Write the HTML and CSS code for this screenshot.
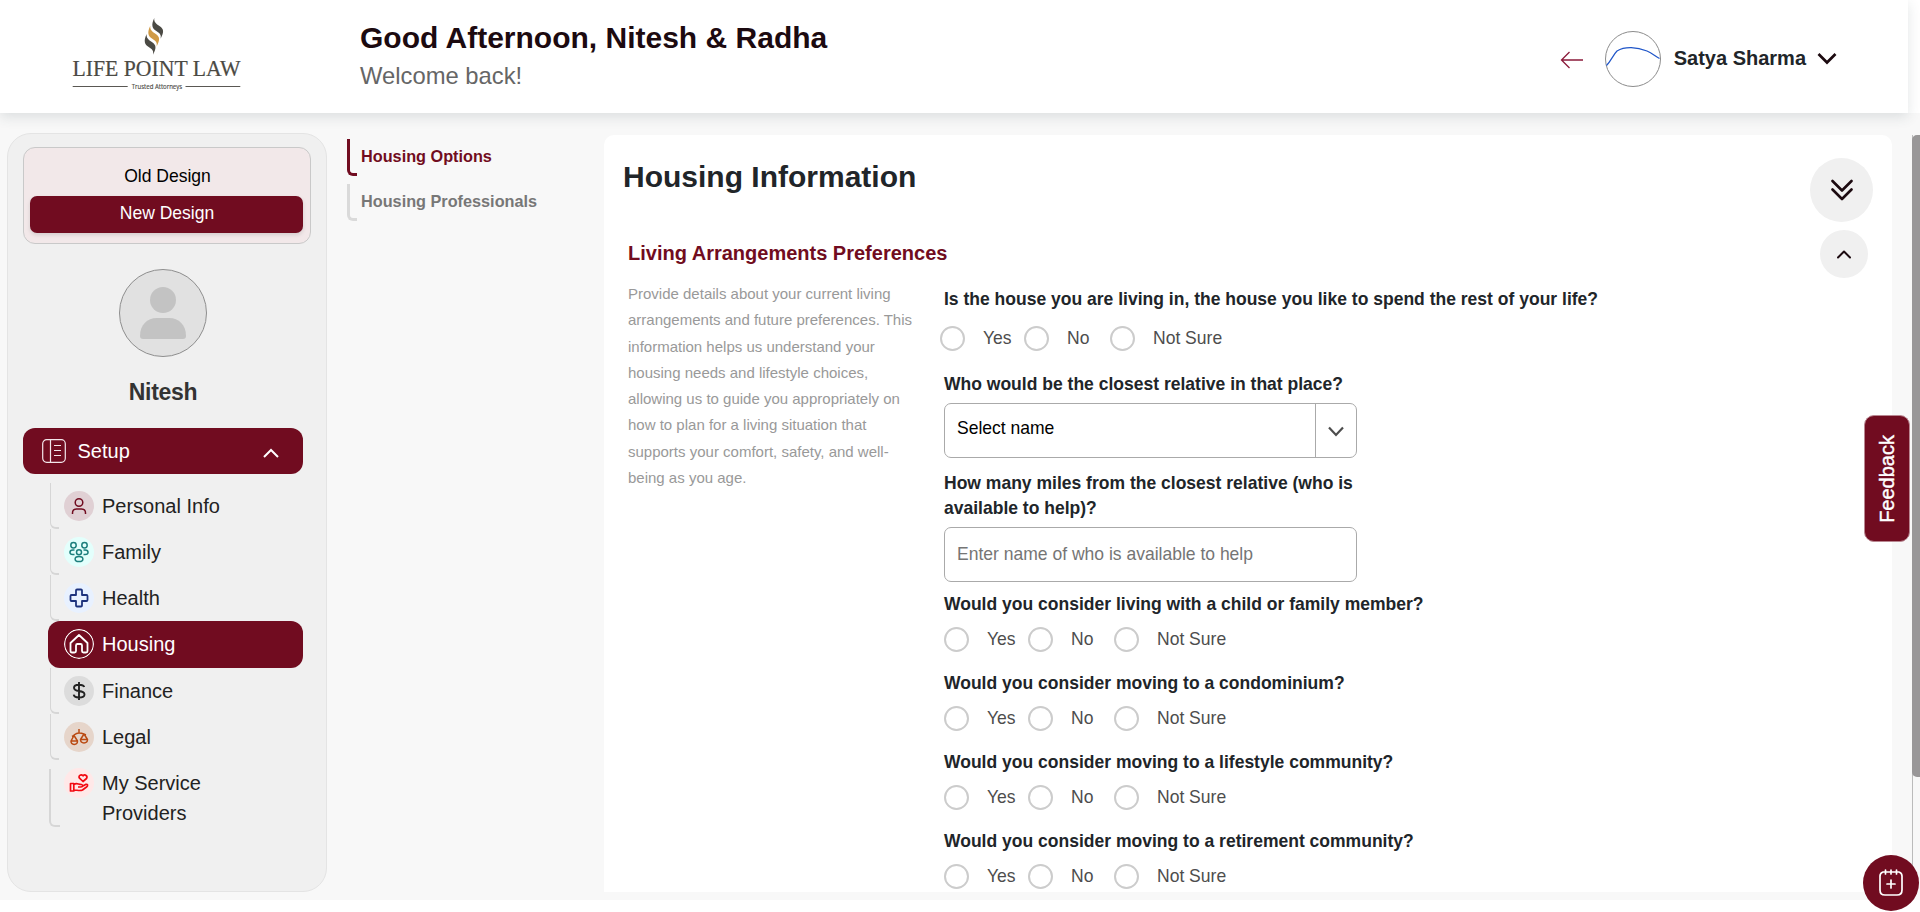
FILE: index.html
```html
<!DOCTYPE html>
<html lang="en">
<head>
<meta charset="utf-8">
<title>Housing Information</title>
<link rel="stylesheet" href="styles.css">
</head>
<body>
<header class="topbar">
  <svg class="logo" width="172" height="76" viewBox="0 0 172 76">
    <g fill="#4b4a44">
      <path transform="translate(81.300 0)" d="M2 0C-1.500 7 0 10.500 4 13C8 15.500 9 17 8.300 20.700C12 14 11.500 11 7.500 8.300C3.500 5.500 1.500 4 2 0Z"/>
      <path transform="translate(73.700 16)" d="M2 0C-1.500 7 0 10.500 4 13C8 15.500 9 17 8.300 20.700C12 14 11.500 11 7.500 8.300C3.500 5.500 1.500 4 2 0Z"/>
    </g>
    <path fill="#d09a45" transform="translate(77.300 7.700)" d="M2 0C-1.500 7 0 10.500 4 13C8 15.500 9 17 8.300 20.700C12 14 11.500 11 7.500 8.300C3.500 5.500 1.500 4 2 0Z"/>
    <text class="logo-name" x="1.500" y="57.700" textLength="168" lengthAdjust="spacingAndGlyphs">LIFE POINT LAW</text>
    <path d="M1.700 68.500H56.700M114.500 68.500H169.300" stroke="#5a5853" stroke-width="1"/>
    <text class="logo-tag" x="60.700" y="70.500" textLength="50.500" lengthAdjust="spacingAndGlyphs">Trusted Attorneys</text>
  </svg>
  <div class="greeting">
    <h1>Good Afternoon, Nitesh &amp; Radha</h1>
    <p>Welcome back!</p>
  </div>
  <div class="account">
    <svg class="back" width="24" height="18" viewBox="0 0 24 18" fill="none" stroke="#8a1a3a" stroke-width="1.300"><path d="M23 9H1.500M9.500 1L1.500 9L9.500 17"/></svg>
    <svg class="signature" width="56" height="56" viewBox="0 0 56 56" fill="none"><circle cx="28" cy="28" r="27.500" stroke="#8c8c8c"/><path d="M1.500 34.500C6 30 8 24 12 20C20 15 32 16 42 20C47 22 50 25 54.500 27.500" stroke="#1f55c8" stroke-width="1.200"/></svg>
    <span class="account-name">Satya Sharma</span>
    <svg class="caret" width="20" height="13" viewBox="0 0 20 13" fill="none" stroke="#1c0a10" stroke-width="2.700"><path d="M1.500 2L10 10.500L18.500 2"/></svg>
  </div>
</header>

<div class="workspace">
  <aside class="sidebar">
    <div class="design-toggle"><span class="toggle-option">Old Design</span><span class="toggle-option selected">New Design</span></div>
    <svg class="avatar" width="88" height="88" viewBox="0 0 88 88"><circle cx="44" cy="44" r="43.500" fill="#e1e1e1" stroke="#8e8e8e"/><circle cx="44" cy="31" r="13" fill="#c3c3c3"/><path fill="#c3c3c3" d="M21 67C21 56 28 49 38 49H50C60 49 67 56 67 67Q67 70 64 70H24Q21 70 21 67Z"/></svg>
    <h2 class="member">Nitesh</h2>
    <div class="setup">
      <svg width="24" height="24" viewBox="0 0 24 24" fill="none" stroke="#f3e6ea" stroke-width="1.200"><rect x=".7" y=".7" width="22.600" height="22.600" rx="4"/><path d="M8.500 1V23M12 6.500H19M12 11.500H19M12 16.500H19"/></svg>
      <span>Setup</span>
      <svg class="setup-caret" width="16" height="10" viewBox="0 0 16 10" fill="none" stroke="#fff" stroke-width="2"><path d="M1 9L8 2L15 9"/></svg>
    </div>
    <nav class="menu">
      <a class="item"><svg class="badge personal" viewBox="0 0 30 30"><circle cx="15" cy="11.500" r="3.800"/><path d="M8.500 23V22Q8.500 18 12.500 18H17.500Q21.500 18 21.500 22V23"/></svg>Personal Info</a>
      <a class="item"><svg class="badge family" viewBox="0 0 30 30"><circle cx="9.500" cy="8.300" r="2.700"/><circle cx="20.500" cy="8.300" r="2.700"/><circle cx="15" cy="15.300" r="2.500"/><ellipse cx="15" cy="22" rx="3.900" ry="2.600"/><path d="M10.500 13H8.800C5 13 5 17.600 8.800 17.600H10.500M19.500 13H21.200C25 13 25 17.600 21.200 17.600H19.500"/></svg>Family</a>
      <a class="item"><svg class="badge health" viewBox="0 0 30 30"><path d="M12 7.500Q12 6.500 13 6.500H17Q18 6.500 18 7.500V12H22.500Q23.500 12 23.500 13V17Q23.500 18 22.500 18H18V22.500Q18 23.500 17 23.500H13Q12 23.500 12 22.500V18H7.500Q6.500 18 6.500 17V13Q6.500 12 7.500 12H12Z"/></svg>Health</a>
      <a class="item current"><svg class="badge housing" viewBox="0 0 30 30"><circle cx="15" cy="15" r="14.400" stroke-width="1.200"/><path d="M6.500 14L15 6L23.500 14V22Q23.500 23.500 22 23.500H19.500Q18 23.500 18 22V16.500Q18 15 16.500 15H13.500Q12 15 12 16.500V22Q12 23.500 10.500 23.500H8Q6.500 23.500 6.500 22Z"/></svg>Housing</a>
      <a class="item"><svg class="badge finance" viewBox="0 0 30 30"><path d="M15 6V24M20.300 11Q19.500 8.700 15 8.700Q10 8.700 10 11.700Q10 14.300 15 15Q20.500 15.700 20.500 18.400Q20.500 21.500 15 21.500Q10 21.500 9.700 18.700"/></svg>Finance</a>
      <a class="item"><svg class="badge legal" viewBox="0 0 30 30"><path d="M15 7V11M8 14.500C11 13 11 11 15 11S19 12 22 13M10 13.500L7 19H13.500ZM20 12L16.500 17.500H23.500ZM7 19C7 23.500 13.500 23.500 13.500 19ZM16.500 17.500C16.500 22 23.500 22 23.500 17.500Z"/></svg>Legal</a>
      <a class="item last"><svg class="badge service" viewBox="0 0 30 30"><path d="M19 13.500L15.500 10.200C13.800 8 17 5.500 19 7.800C21 5.800 24 8 22.500 10.500ZM6.500 15.500H9.800V23H6.500ZM9.800 16.500C13 14.500 14 16.500 17.500 16.500C19.500 17 19 19 17 19H14M19 18L22 16.300C24 16 24 17.800 22.500 19L18.500 22C16 23.200 13 22 9.800 22"/></svg><span>My Service<br>Providers</span></a>
    </nav>
  </aside>

  <nav class="subnav">
    <a class="subnav-link active">Housing Options</a>
    <a class="subnav-link">Housing Professionals</a>
  </nav>

  <main class="content">
    <div class="content-head">
      <h2 class="page-title">Housing Information</h2>
      <span class="round big"><svg width="22" height="22" viewBox="0 0 22 22" fill="none" stroke="#1c0a10" stroke-width="2.600" stroke-linecap="round" stroke-linejoin="round"><path d="M1.500 2L11 11.500L20.500 2M1.500 10.500L11 20L20.500 10.500"/></svg></span>
    </div>
    <div class="section-head">
      <h3>Living Arrangements Preferences</h3>
      <span class="round small"><svg width="14" height="9" viewBox="0 0 14 9" fill="none" stroke="#1c0a10" stroke-width="2" stroke-linecap="round" stroke-linejoin="round"><path d="M1 7.500L7 1.500L13 7.500"/></svg></span>
    </div>
    <div class="section-body">
      <p class="intro">Provide details about your current living arrangements and future preferences. This information helps us understand your housing needs and lifestyle choices, allowing us to guide you appropriately on how to plan for a living situation that supports your comfort, safety, and well-being as you age.</p>
      <form class="form">
        <div class="question first"><label>Is the house you are living in, the house you like to spend the rest of your life?</label>
          <div class="choices"><span class="choice">Yes</span><span class="choice">No</span><span class="choice">Not Sure</span></div></div>
        <div class="question relative"><label>Who would be the closest relative in that place?</label>
          <div class="field select"><span class="value">Select name</span><span class="drop"><svg width="16" height="11" viewBox="0 0 16 11" fill="none" stroke="#4d4d4d" stroke-width="2.200"><path d="M1 1.500L8 9L15 1.500"/></svg></span></div></div>
        <div class="question miles"><label>How many miles from the closest relative (who is available to help)?</label>
          <div class="field"><span class="placeholder">Enter name of who is available to help</span></div></div>
        <div class="question child"><label>Would you consider living with a child or family member?</label>
          <div class="choices"><span class="choice">Yes</span><span class="choice">No</span><span class="choice">Not Sure</span></div></div>
        <div class="question"><label>Would you consider moving to a condominium?</label>
          <div class="choices"><span class="choice">Yes</span><span class="choice">No</span><span class="choice">Not Sure</span></div></div>
        <div class="question"><label>Would you consider moving to a lifestyle community?</label>
          <div class="choices"><span class="choice">Yes</span><span class="choice">No</span><span class="choice">Not Sure</span></div></div>
        <div class="question"><label>Would you consider moving to a retirement community?</label>
          <div class="choices"><span class="choice">Yes</span><span class="choice">No</span><span class="choice">Not Sure</span></div></div>
      </form>
    </div>
  </main>
  <div class="scroll-track"><div class="scroll-thumb"></div></div>
</div>

<div class="feedback"><span>Feedback</span></div>
<div class="fab"><svg width="24" height="28" viewBox="0 0 24 28" fill="none" stroke="#fff" stroke-width="1.700" stroke-linecap="round"><path d="M4 3H20Q23 4 23 7V21Q23 26 18 26H6Q1 26 1 21V7Q1 4 4 3ZM6.500 1V5M12 1V5M17.500 1V5M12 11V19M8 15H16"/></svg></div>
</body>
</html>
```
FILE: styles.css
```css
*, *::before { box-sizing: border-box; }
body { margin: 0; height: 912px; overflow: hidden; background: #fff; color: #212529; font-family: "Liberation Sans", Arial, sans-serif; }
h1, h2, h3, p { margin: 0; }
svg { flex: none; display: block; }

.topbar { position: relative; display: flex; width: 1908px; height: 113px; background: #fff; box-shadow: 0 4px 12px rgba(50, 70, 80, .14); }
.logo { margin: 18px 0 0 71px; overflow: visible; }
.logo-name { font: 23.500px "Liberation Serif", serif; fill: #4b4a44; stroke: #4b4a44; stroke-width: .2px; }
.logo-tag { font: 7px "Open Sans", sans-serif; fill: #4b4a44; stroke: #4b4a44; stroke-width: .15px; }
.greeting { margin: 20px 0 0 117px; }
.greeting h1 { font-size: 30px; line-height: 36px; color: #1c0a10; white-space: nowrap; }
.greeting p { margin-top: 2px; font-size: 23.800px; line-height: 36px; color: #666; }
.account { display: flex; align-items: flex-start; margin-left: auto; padding-right: 71px; }
.back { margin-top: 51px; }
.signature { margin: 31px 0 0 21px; }
.account-name { margin: 43px 0 0 13px; font-size: 20px; line-height: 30px; font-weight: bold; white-space: nowrap; }
.caret { margin: 52px 0 0 11px; }

.workspace { display: flex; height: 787px; padding: 20px 0 8px 7px; background: #f8f8f8; }
.sidebar { width: 320px; height: 759px; padding: 13px 15px; border: 1px solid #e4e4e4; border-radius: 24px; background: #f0f0f0; }
.design-toggle { width: 288px; height: 97px; padding: 7px 6px 0 6px; border: 1px solid #c9c9c9; border-radius: 12px; background: #f2e8e9; font-size: 17.520px; color: #000; text-align: center; }
.toggle-option { display: block; height: 41px; padding-left: 1px; line-height: 42px; }
.toggle-option.selected { width: 273px; height: 37px; line-height: 34px; border-radius: 7px; background: #710c20; color: #fff; box-shadow: 0 2px 4px rgba(0, 0, 0, .12); }
.avatar { margin: 25px 0 0 96px; }
.member { width: 280px; margin-top: 17px; font-size: 23px; letter-spacing: -.3px; line-height: 36px; color: #333; text-align: center; }
.setup { display: flex; align-items: center; width: 280px; height: 46px; margin-top: 18px; padding: 0 24px 0 19px; border-radius: 12px; background: #710c20; color: #fff; font-size: 20px; }
.setup span { margin-left: 11.500px; }
.setup-caret { margin: 4px 0 0 auto; }
.menu { width: 255px; margin: 9px 0 0 25px; }
.item { position: relative; display: flex; height: 46px; padding: 8px 0 0 16px; gap: 8px; font-size: 20px; line-height: 30px; color: #222; }
.item::before { content: ""; position: absolute; left: 2px; top: 0; width: 9px; height: 46px; border: solid #d6d6d6; border-width: 0 0 2px 1.500px; border-bottom-left-radius: 6px; }
.item.current { height: 47px; border-radius: 12px; background: #710c20; color: #fff; }
.item.current::before { content: none; }
.item.last::before { left: 1px; top: 9px; width: 11px; height: 58px; border-left-width: 2px; }
.badge { width: 30px; height: 30px; border-radius: 50%; fill: none; stroke-width: 1.500; stroke-linejoin: round; }
.personal { background: #e0d0d4; stroke: #710c20; }
.family { background: #e3fffc; stroke: #1d7f7d; }
.health { background: #e8f1ff; stroke: #1d327c; stroke-width: 1.800; }
.housing { stroke: #fff; stroke-width: 1.800; }
.finance { background: #dcdcdc; stroke: #222; stroke-width: 1.900; }
.legal { background: #e6d5ca; stroke: #ba4a12; }
.service { background: #ffe8e8; stroke: #f20a12; stroke-width: 1.700; }

.subnav { width: 277px; padding: 6px 0 0 20px; }
.subnav-link { position: relative; display: block; height: 37px; margin-bottom: 8px; padding-left: 14px; font-size: 16.250px; line-height: 35px; font-weight: bold; color: #777; }
.subnav-link::before { content: ""; position: absolute; left: 0; top: 0; width: 10px; height: 37px; border: solid #dadada; border-width: 0 0 3px 3px; border-bottom-left-radius: 6px; }
.subnav-link.active { color: #710c20; }
.subnav-link.active::before { border-color: #710c20; }

.content { width: 1288px; height: 757px; margin-top: 2px; padding: 0 19px; border-radius: 10px 10px 0 0; background: #fff; overflow: hidden; }
.content-head { display: flex; justify-content: space-between; height: 95px; padding-top: 23px; }
.page-title { font-size: 30px; line-height: 38px; }
.round { display: flex; align-items: center; justify-content: center; border-radius: 50%; background: #f0f0f0; }
.big { width: 63px; height: 64px; }
.small { width: 48px; height: 48px; margin-right: 5px; }
.section-head { display: flex; justify-content: space-between; height: 50px; padding-left: 5px; }
.section-head h3 { margin-top: 8px; font-size: 20px; line-height: 30px; color: #710c20; }
.section-body { display: flex; padding-left: 5px; }
.intro { width: 290px; margin: 1px 26px 0 0; font-size: 15px; line-height: 26.250px; color: #999; }
.form { padding-top: 7px; }
.question { margin-bottom: 19px; }
.question label { display: block; font-size: 17.520px; line-height: 25px; font-weight: bold; white-space: nowrap; }
.question .choices { display: grid; grid-template-columns: 84px 86px 120px; margin-top: 10px; }
.question.first { margin-bottom: 21px; }
.question.first .choices { margin: 14px 0 0 -4px; }
.choice { display: flex; gap: 18px; height: 25px; font-size: 17.520px; line-height: 24px; color: #4d4d4d; white-space: nowrap; }
.choice::before { content: ""; flex: none; width: 25px; height: 25px; border: 2px solid #ccc; border-radius: 50%; }
.field { display: flex; width: 413px; height: 55px; margin: 6px 0 0; padding-left: 12px; border: 1px solid #aaa; border-radius: 7px; font-size: 17.520px; }
.question.relative { margin-bottom: 13px; }
.value { flex: 1; line-height: 48px; color: #000; }
.drop { display: flex; align-items: center; justify-content: center; width: 41px; padding-top: 2px; border-left: 1px solid #aaa; }
.placeholder { line-height: 53px; color: #757575; }
.question.miles { margin-bottom: 10px; }
.question.miles label { width: 413px; white-space: normal; }

.scroll-track { width: 8px; height: 757px; margin: 2px 0 0 20px; border-left: 1px solid #bbb; }
.scroll-thumb { width: 8px; height: 642px; margin-left: -1px; border-radius: 5px 0 0 5px; background: #999798; }

.feedback { position: absolute; left: 1864px; top: 415px; display: flex; align-items: center; justify-content: center; width: 46px; height: 127px; border: 1px solid #b98791; border-radius: 10px; background: #710c20; color: #fff; font-size: 20px; }
.feedback span { writing-mode: vertical-rl; transform: rotate(180deg); -webkit-text-stroke: .4px #fff; }
.fab { position: absolute; left: 1863px; top: 855px; display: flex; align-items: center; justify-content: center; width: 56px; height: 56px; border-radius: 50%; background: #710c20; }
```
